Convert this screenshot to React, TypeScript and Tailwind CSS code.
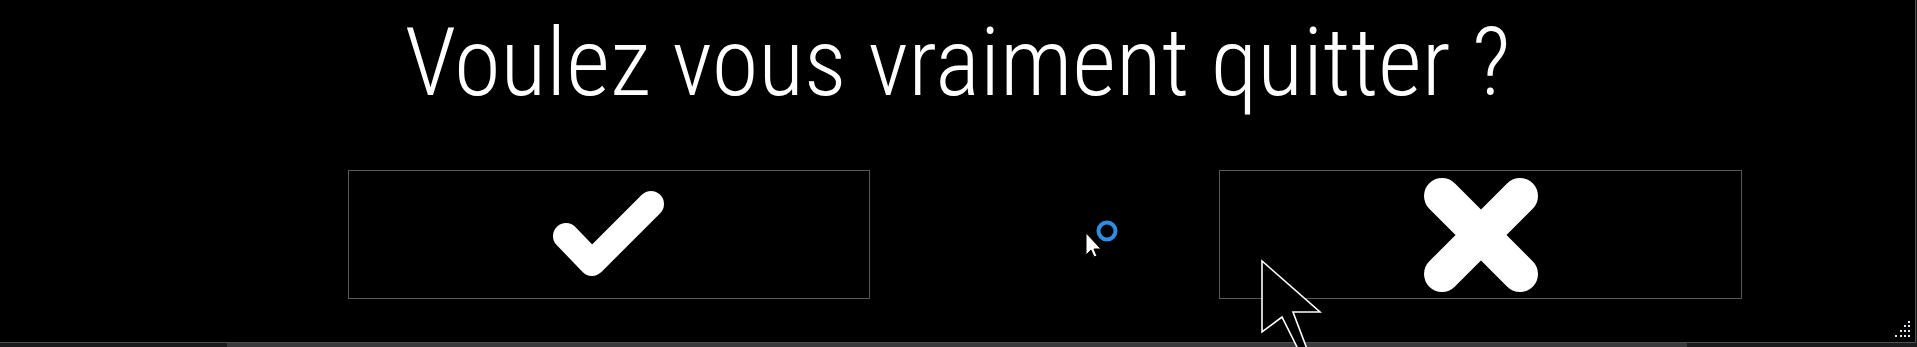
import { useState } from 'react'

// Quit confirmation dialog, full-window, dark.

function CheckIcon() {
  return (
    <svg width="112" height="88" viewBox="0 0 112 88" fill="none" aria-hidden="true">
      <path d="M13 45 L39 72 L98 13" stroke="white" strokeWidth="26" strokeLinecap="round" strokeLinejoin="round" />
    </svg>
  )
}

function CrossIcon() {
  return (
    <svg width="114" height="114" viewBox="0 0 114 114" fill="none" aria-hidden="true">
      <path d="M18 18 L96 96 M96 18 L18 96" stroke="white" strokeWidth="36" strokeLinecap="round" />
    </svg>
  )
}

function ResizeGrip() {
  const dots: [number, number][] = [
    [13, 0],
    [9, 4], [13, 4],
    [5, 9], [9, 9], [13, 9],
    [0, 14], [5, 14], [9, 14], [13, 14],
  ]
  return (
    <svg width="16" height="17" viewBox="0 0 16 17" className="absolute bottom-[4px] right-[4px]" aria-hidden="true">
      {dots.map(([x, y]) => (
        <rect key={`${x}-${y}`} x={x} y={y} width="2" height="2" fill="#dfe6ee" />
      ))}
    </svg>
  )
}

function Pointers() {
  return (
    <>
      {/* small system cursor with busy ring */}
      <svg width="40" height="40" viewBox="0 0 40 40" className="absolute left-[1084px] top-[219px]" aria-hidden="true">
        <path d="M2 14 L2 36 L7 31 L10 38 L13 37 L10 30 L17 30 Z" fill="white" stroke="black" strokeWidth="1" />
        <circle cx="23" cy="12" r="8.5" fill="none" stroke="#2d8fe3" strokeWidth="4" />
      </svg>
      {/* large outlined pointer */}
      <svg width="70" height="90" viewBox="0 0 70 90" className="absolute left-[1258px] top-[257px]" aria-hidden="true">
        <path
          d="M4 4 L4 75 L24 60 L40 92 L49 92 L35 55 L62 55 Z"
          fill="black"
          stroke="white"
          strokeWidth="1.6"
          strokeLinejoin="miter"
        />
      </svg>
    </>
  )
}

export default function App() {
  const [choice, setChoice] = useState<'yes' | 'no' | null>(null)

  return (
    <div className="relative h-[347px] w-[1917px] overflow-hidden bg-[#1b1b1d] font-['Roboto_Condensed',Roboto,sans-serif]">
      <div className="relative flex h-[343px] w-[1916px] flex-col border-b border-r border-[#4f4f4f] bg-black">
        <h1 className="pt-[15px] text-center text-[95px] font-light leading-none text-white">
          Voulez vous vraiment quitter ?
        </h1>
        <div className="mt-[60px] flex gap-[349px] pl-[348px]">
          <button
            onClick={() => setChoice('yes')}
            aria-label="Oui"
            className={
              'flex h-[129px] w-[522px] items-center justify-center border border-[#595959] ' +
              (choice === 'yes' ? 'bg-white/5' : 'bg-black')
            }
          >
            <CheckIcon />
          </button>
          <button
            onClick={() => setChoice('no')}
            aria-label="Non"
            className={
              'flex h-[129px] w-[523px] items-center justify-center border border-[#595959] ' +
              (choice === 'no' ? 'bg-white/5' : 'bg-black')
            }
          >
            <CrossIcon />
          </button>
        </div>
        <ResizeGrip />
      </div>
      <div className="flex h-[4px] w-full pl-[227px]">
        <div className="h-full w-[1460px] bg-[#3a3a3c]" />
      </div>
      <Pointers />
    </div>
  )
}
